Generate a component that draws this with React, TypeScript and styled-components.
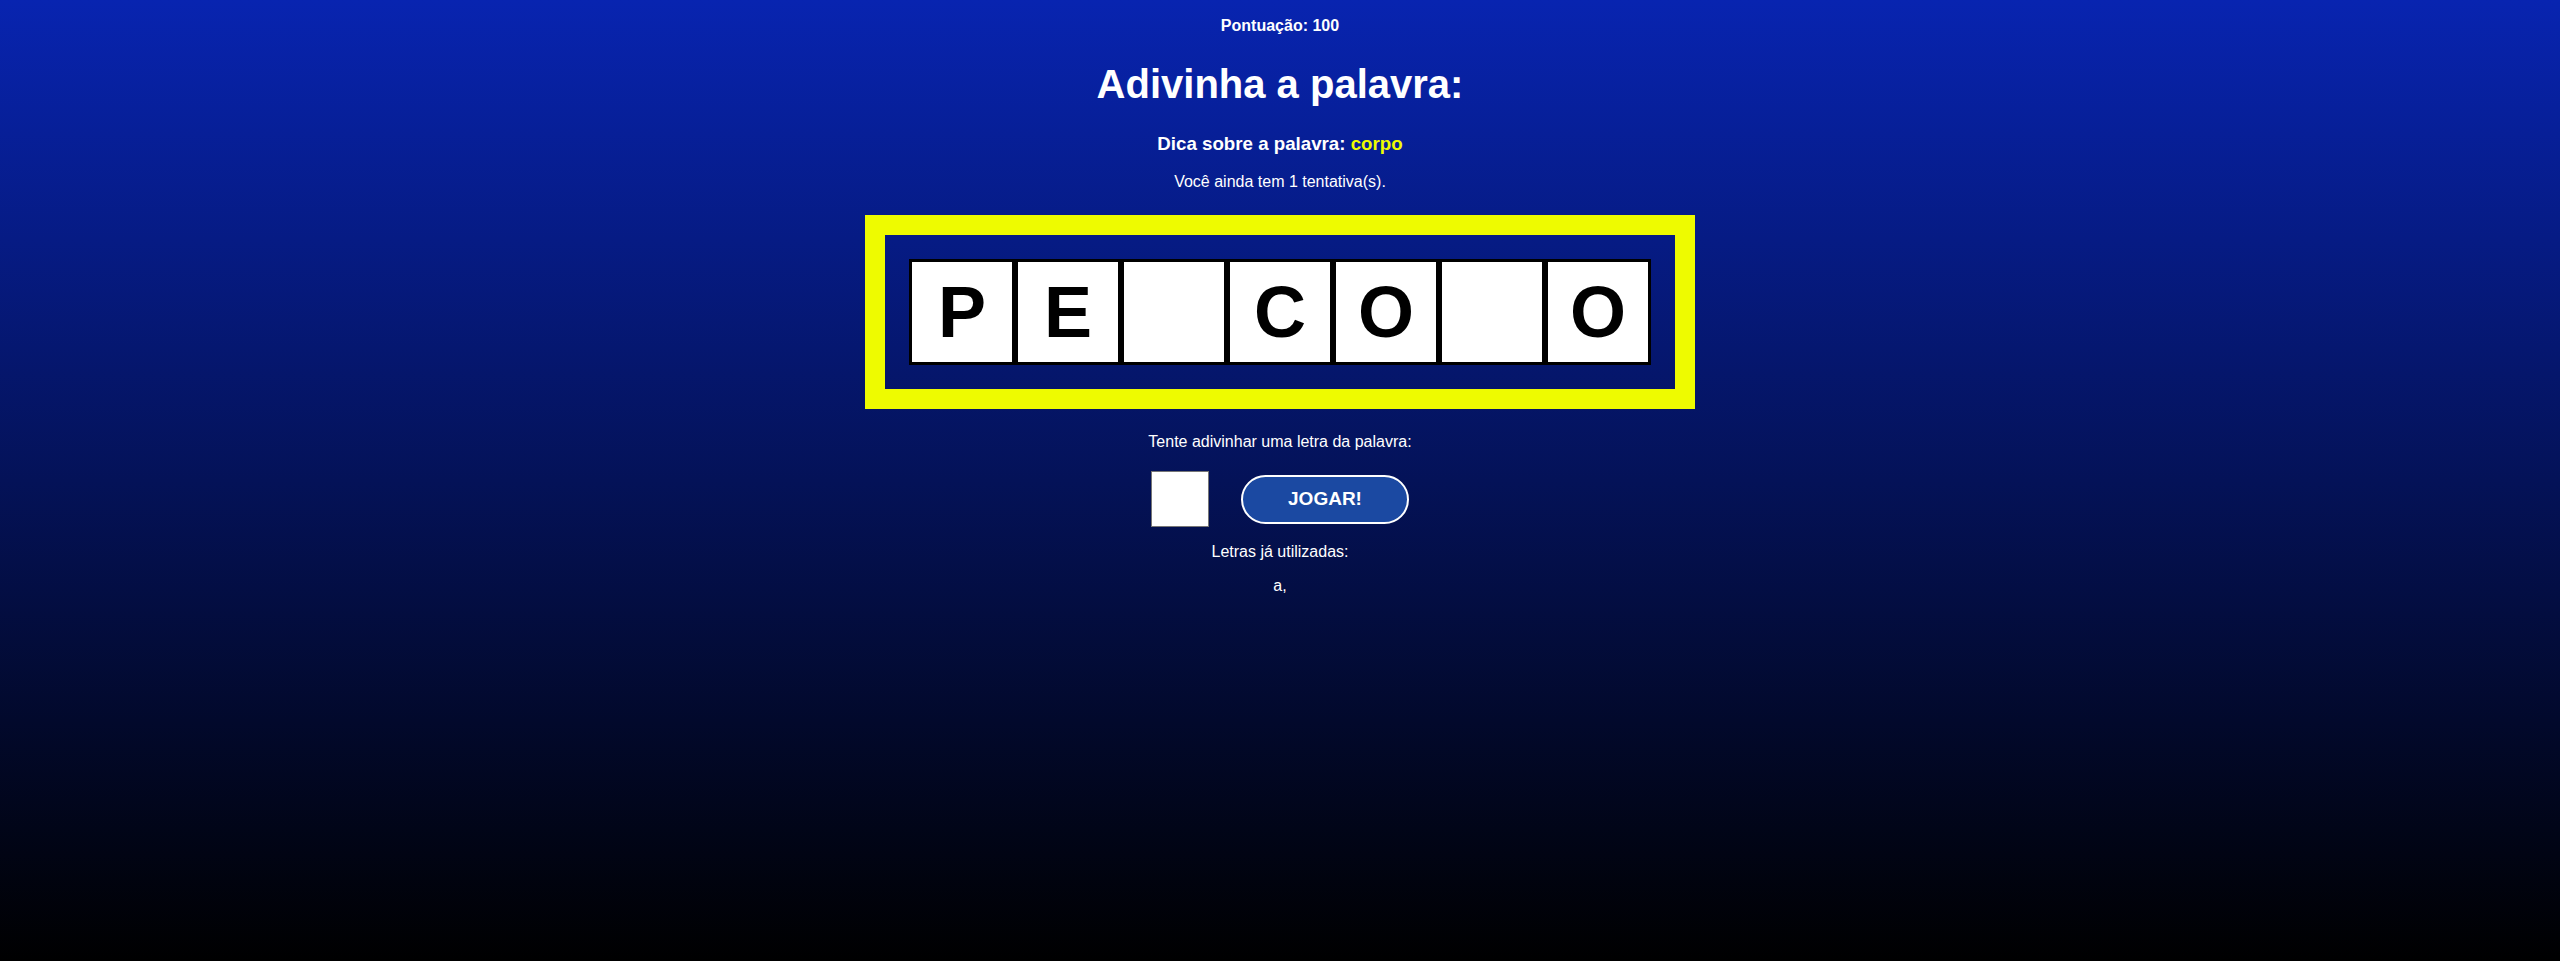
import React from "react";
import styled, { createGlobalStyle } from "styled-components";

const GlobalStyle = createGlobalStyle`
  html, body {
    margin: 0;
    padding: 0;
  }
  body {
    font-family: "Liberation Sans", Arial, sans-serif;
    background: linear-gradient(180deg, #0824b0 0%, #000000 100%);
    min-height: 961px;
    color: #ffffff;
  }
`;

const Page = styled.main`
  min-height: 961px;
  display: flex;
  flex-direction: column;
  align-items: center;
  text-align: center;
  color: #ffffff;
  background: linear-gradient(180deg, #0824b0 0%, #000000 100%);
`;

const Score = styled.p`
  margin: 16.5px 0 0;
  font-size: 16px;
  font-weight: bold;
`;

const Title = styled.h1`
  margin: 27px 0 0;
  font-size: 40px;
  font-weight: bold;
`;

const Hint = styled.h3`
  margin: 26px 0 0;
  font-size: 18.72px;
  font-weight: bold;
`;

const HintWord = styled.span`
  color: #eefb00;
`;

const Info = styled.p<{ $top: number }>`
  margin: ${(p) => p.$top}px 0 0;
  font-size: 16px;
`;

const Board = styled.div`
  margin-top: 24px;
  border: 20px solid #eefb00;
  padding: 24px;
  display: flex;
`;

const Tile = styled.div`
  width: 100px;
  height: 100px;
  border: 3px solid #000000;
  background: #ffffff;
  color: #000000;
  font-size: 72px;
  font-weight: bold;
  display: flex;
  align-items: center;
  justify-content: center;
`;

const GuessRow = styled.form`
  margin-top: 20px;
  display: flex;
  align-items: center;
  gap: 32px;
`;

const LetterInput = styled.input`
  box-sizing: border-box;
  width: 58px;
  height: 56px;
  border: 1px solid #767676;
  background: #ffffff;
  font-size: 24px;
  text-align: center;
  padding: 0;
`;

const PlayButton = styled.button`
  box-sizing: border-box;
  width: 168px;
  height: 49px;
  border: 2px solid #ffffff;
  border-radius: 25px;
  background: #1b49a2;
  color: #ffffff;
  font-family: "Liberation Sans", Arial, sans-serif;
  font-size: 19px;
  font-weight: bold;
  cursor: pointer;
`;

const letters = ["P", "E", "", "C", "O", "", "O"];

export default function App() {
  return (
    <>
      <GlobalStyle />
      <Page>
        <Score>Pontuação: 100</Score>
        <Title>Adivinha a palavra:</Title>
        <Hint>
          Dica sobre a palavra: <HintWord>corpo</HintWord>
        </Hint>
        <Info $top={18}>Você ainda tem 1 tentativa(s).</Info>
        <Board>
          {letters.map((l, i) => (
            <Tile key={i}>{l}</Tile>
          ))}
        </Board>
        <Info $top={24.5}>Tente adivinhar uma letra da palavra:</Info>
        <GuessRow onSubmit={(e) => e.preventDefault()}>
          <LetterInput type="text" maxLength={1} />
          <PlayButton type="submit">JOGAR!</PlayButton>
        </GuessRow>
        <Info $top={15.5}>Letras já utilizadas:</Info>
        <Info $top={16}>a,</Info>
      </Page>
    </>
  );
}
